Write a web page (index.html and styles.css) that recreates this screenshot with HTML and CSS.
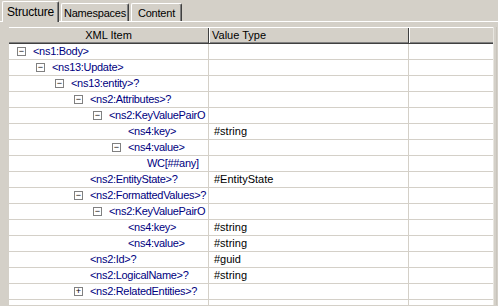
FILE: index.html
```html
<!DOCTYPE html>
<html lang="en">
<head>
    <meta charset="UTF-8">
    <title>Schema Structure</title>
    <link rel="stylesheet" href="styles.css">
</head>
<body>
    <div class="tabs">
        <div class="tab active t1">Structure</div>
        <div class="tab t2">Namespaces</div>
        <div class="tab t3">Content</div>
    </div>
    <div class="panel">
        <div class="grid">
            <div class="head">
                <div class="hcell c1 center">XML Item</div>
                <div class="hcell c2">Value Type</div>
                <div class="hcell c3"></div>
            </div>
            <div class="row"><div class="cell c1 l0"><span class="exp">&minus;</span>&lt;ns1:Body&gt;</div><div class="cell c2"></div><div class="cell c3"></div></div>
            <div class="row"><div class="cell c1 l1"><span class="exp">&minus;</span>&lt;ns13:Update&gt;</div><div class="cell c2"></div><div class="cell c3"></div></div>
            <div class="row"><div class="cell c1 l2"><span class="exp">&minus;</span>&lt;ns13:entity&gt;?</div><div class="cell c2"></div><div class="cell c3"></div></div>
            <div class="row"><div class="cell c1 l3"><span class="exp">&minus;</span>&lt;ns2:Attributes&gt;?</div><div class="cell c2"></div><div class="cell c3"></div></div>
            <div class="row"><div class="cell c1 l4"><span class="exp">&minus;</span>&lt;ns2:KeyValuePairO</div><div class="cell c2"></div><div class="cell c3"></div></div>
            <div class="row"><div class="cell c1 l5 leaf">&lt;ns4:key&gt;</div><div class="cell c2">#string</div><div class="cell c3"></div></div>
            <div class="row"><div class="cell c1 l5"><span class="exp">&minus;</span>&lt;ns4:value&gt;</div><div class="cell c2"></div><div class="cell c3"></div></div>
            <div class="row"><div class="cell c1 l6 leaf">WC[##any]</div><div class="cell c2"></div><div class="cell c3"></div></div>
            <div class="row"><div class="cell c1 l3 leaf">&lt;ns2:EntityState&gt;?</div><div class="cell c2">#EntityState</div><div class="cell c3"></div></div>
            <div class="row"><div class="cell c1 l3"><span class="exp">&minus;</span>&lt;ns2:FormattedValues&gt;?</div><div class="cell c2"></div><div class="cell c3"></div></div>
            <div class="row"><div class="cell c1 l4"><span class="exp">&minus;</span>&lt;ns2:KeyValuePairO</div><div class="cell c2"></div><div class="cell c3"></div></div>
            <div class="row"><div class="cell c1 l5 leaf">&lt;ns4:key&gt;</div><div class="cell c2">#string</div><div class="cell c3"></div></div>
            <div class="row"><div class="cell c1 l5 leaf">&lt;ns4:value&gt;</div><div class="cell c2">#string</div><div class="cell c3"></div></div>
            <div class="row"><div class="cell c1 l3 leaf">&lt;ns2:Id&gt;?</div><div class="cell c2">#guid</div><div class="cell c3"></div></div>
            <div class="row"><div class="cell c1 l3 leaf">&lt;ns2:LogicalName&gt;?</div><div class="cell c2">#string</div><div class="cell c3"></div></div>
            <div class="row"><div class="cell c1 l3"><span class="exp">+</span>&lt;ns2:RelatedEntities&gt;?</div><div class="cell c2"></div><div class="cell c3"></div></div>
            <div class="row"><div class="cell c1"></div><div class="cell c2"></div><div class="cell c3"></div></div>
        </div>
        <div class="edge"></div>
    </div>
</body>
</html>
```

FILE: styles.css
```css
* {
    box-sizing: border-box;
    margin: 0;
    padding: 0;
}

html, body {
    width: 498px;
    height: 306px;
    overflow: hidden;
}

body {
    background-color: #d4d0c8;
    font-family: "Liberation Sans", Arial, sans-serif;
    font-size: 11px;
    color: #000;
}

/* tab strip */
.tabs {
    display: flex;
    align-items: flex-end;
    height: 22px;
    padding-left: 2px;
    border-bottom: 1px solid #fff;
}

.tab {
    height: 18px;
    margin-right: 2px;
    padding-top: 2px;
    border-top: 1px solid #fff;
    border-left: 1px solid #fff;
    border-right: 1px solid #404040;
    border-radius: 2px 2px 0 0;
    box-shadow: inset -1px 0 0 #808080;
    line-height: 14px;
    text-align: center;
    letter-spacing: -0.2px;
    white-space: nowrap;
}

.tab.active {
    height: 21px;
    margin-bottom: -1px;
    padding-top: 3px;
    background-color: #d4d0c8;
    font-size: 12px;
    line-height: 14px;
}

.t1 { width: 57px; }
.t2 { width: 68px; }
.t3 { width: 51px; }

/* grid area */
.panel {
    display: flex;
    padding: 5px 0 0 9px;
    height: 283px;
}

.grid {
    width: 484px;
    background-color: #fff;
    overflow: hidden;
}

.edge {
    flex: 1;
    border-left: 1px solid #e8e6e0;
    background: linear-gradient(to right, #d4d0c8 0, #d4d0c8 2px, #c8c4bc 2px, #c8c4bc 3px, #d4d0c8 3px);
}

.head {
    display: flex;
    height: 17px;
    background-color: #d4d0c8;
    border-top: 1px solid #fff;
    border-bottom: 1px solid #404040;
    box-shadow: inset 0 -1px 0 #808080;
}

.hcell {
    height: 15px;
    line-height: 15px;
    padding-left: 3px;
    white-space: nowrap;
}

.hcell.c1, .hcell.c2 {
    border-right: 1px solid #404040;
    box-shadow: 1px 0 0 #fff;
}

.center {
    text-align: center;
    padding-left: 0;
}

.c1 { width: 200px; }
.c2 { width: 200px; }
.c3 { width: 84px; }

.row {
    display: flex;
    height: 16px;
    border-bottom: 1px solid #d4d0c8;
}

.cell {
    height: 15px;
    line-height: 15px;
    white-space: nowrap;
    overflow: hidden;
}

.cell.c1, .cell.c2 {
    border-right: 1px solid #d4d0c8;
}

.cell.c1 {
    color: #000080;
    display: flex;
    align-items: center;
    letter-spacing: -0.3px;
}

.cell.c2 {
    padding-left: 5px;
}

.exp {
    flex: none;
    width: 9px;
    height: 9px;
    margin-right: 7px;
    border: 1px solid #808080;
    background-color: #fff;
    color: #000;
    font-size: 9px;
    line-height: 7px;
    letter-spacing: 0;
    text-align: center;
}

/* tree levels: expander starts 19px further per level */
.l0 { padding-left: 8px; }
.l1 { padding-left: 27px; }
.l2 { padding-left: 46px; }
.l3 { padding-left: 65px; }
.l4 { padding-left: 84px; }
.l5 { padding-left: 103px; }
.l6 { padding-left: 122px; }

/* leaves have no expander, so text lines up with siblings' text */
.leaf.l3 { padding-left: 81px; }
.leaf.l5 { padding-left: 119px; }
.leaf.l6 { padding-left: 138px; }
```
